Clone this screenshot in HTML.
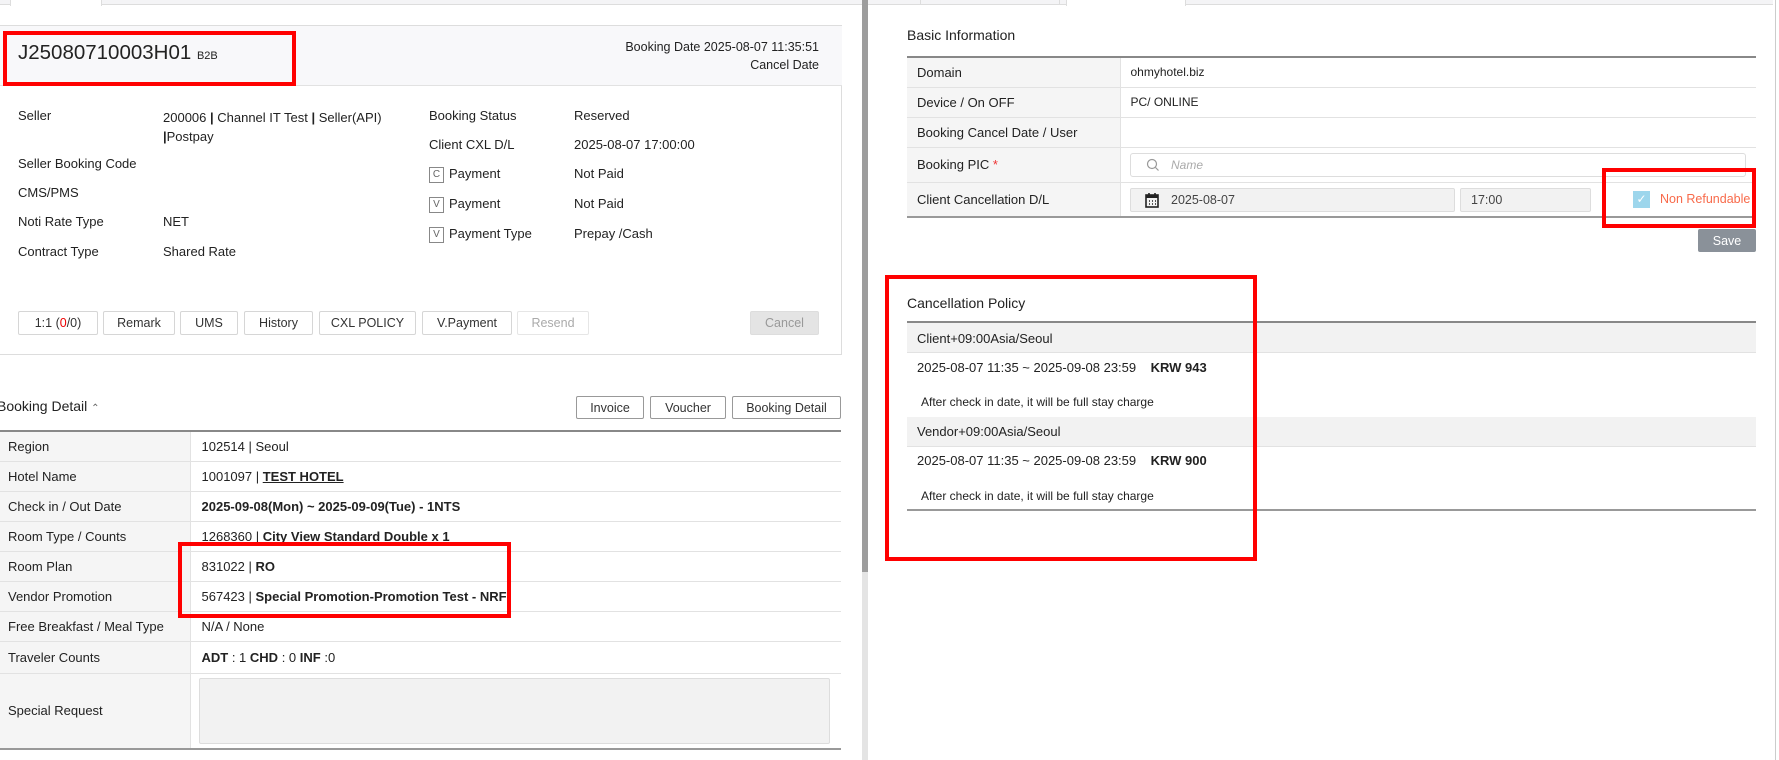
<!DOCTYPE html>
<html><head><meta charset="utf-8"><style>
*{box-sizing:border-box;margin:0;padding:0}
body{width:1779px;height:760px;overflow:hidden;background:#fff;font-family:"Liberation Sans",Arial,sans-serif;font-size:13px;color:#222;position:relative}
.a{position:absolute;white-space:nowrap}
.btn{position:absolute;height:24px;border:1px solid #d6d6d6;border-radius:2px;background:#fff;font-size:12.5px;display:flex;align-items:center;justify-content:center;color:#333}
.red{position:absolute;border:4px solid #f00}
table{border-collapse:collapse;position:absolute}
td{border-bottom:1px solid #e2e2e2;padding:0 0 0 8px;font-size:13px;vertical-align:middle}
td.l{background:#f5f5f5;border-right:1px solid #e2e2e2}
.chk{display:inline-block;width:15px;height:16px;border:1px solid #888;font-size:10px;text-align:center;line-height:14px;color:#666;margin-right:5px;vertical-align:middle}
</style></head><body>
<div class="a" style="left:0;top:0;width:862px;height:5px;background:#f4f4f6;border-bottom:1px solid #ddd"></div>
<div class="a" style="left:10px;top:0;width:92px;height:6px;background:#fff;border-left:1px solid #ddd;border-right:1px solid #ddd"></div>
<div class="a" style="left:0;top:25px;width:842px;height:330px;border:1px solid #ddd;border-left:none;background:#fff"></div>
<div class="a" style="left:0;top:25px;width:842px;height:61px;background:#f8f8fa;border-bottom:1px solid #e2e2e2;border-top:1px solid #ddd"></div>
<div class="a" style="left:18px;top:41px;font-size:20.5px">J25080710003H01 <span style="font-size:11px">B2B</span></div>
<div class="a" style="right:960px;top:38px;font-size:12.5px;text-align:right;line-height:18px">Booking Date 2025-08-07 11:35:51<br>Cancel Date</div>
<div class="red" style="left:3px;top:31px;width:293px;height:55px"></div>
<div class="a" style="left:18px;top:108px">Seller</div>
<div class="a" style="left:163px;top:108px;line-height:19px">200006 <b>|</b> Channel IT Test <b>|</b> Seller(API)<br><b>|</b>Postpay</div>
<div class="a" style="left:18px;top:156px">Seller Booking Code</div>
<div class="a" style="left:18px;top:185px">CMS/PMS</div>
<div class="a" style="left:18px;top:214px">Noti Rate Type</div><div class="a" style="left:163px;top:214px">NET</div>
<div class="a" style="left:18px;top:244px">Contract Type</div><div class="a" style="left:163px;top:244px">Shared Rate</div>
<div class="a" style="left:429px;top:108px">Booking Status</div><div class="a" style="left:574px;top:108px">Reserved</div>
<div class="a" style="left:429px;top:137px">Client CXL D/L</div><div class="a" style="left:574px;top:137px">2025-08-07 17:00:00</div>
<div class="a" style="left:429px;top:166px"><span class="chk">C</span>Payment</div><div class="a" style="left:574px;top:166px">Not Paid</div>
<div class="a" style="left:429px;top:196px"><span class="chk">V</span>Payment</div><div class="a" style="left:574px;top:196px">Not Paid</div>
<div class="a" style="left:429px;top:226px"><span class="chk">V</span>Payment Type</div><div class="a" style="left:574px;top:226px">Prepay /Cash</div>
<div class="btn" style="left:18px;top:311px;width:80px">1:1 (<span style="color:#e00">0</span>/0)</div>
<div class="btn" style="left:103px;top:311px;width:72px">Remark</div>
<div class="btn" style="left:180px;top:311px;width:58px">UMS</div>
<div class="btn" style="left:244px;top:311px;width:69px">History</div>
<div class="btn" style="left:319px;top:311px;width:97px">CXL POLICY</div>
<div class="btn" style="left:422px;top:311px;width:90px">V.Payment</div>
<div class="btn" style="left:517px;top:311px;width:72px;color:#aaa;border-color:#e6e6e6">Resend</div>
<div class="btn" style="left:750px;top:311px;width:69px;background:#e4e4e4;border-color:#ddd;color:#999">Cancel</div>
<div class="a" style="left:-3px;top:398px;font-size:14px">Booking Detail <span style="font-size:10px;color:#666">&#8963;</span></div>
<div class="btn" style="left:576px;top:396px;width:68px;height:23px;border-color:#999">Invoice</div>
<div class="btn" style="left:650px;top:396px;width:76px;height:23px;border-color:#999">Voucher</div>
<div class="btn" style="left:732px;top:396px;width:109px;height:23px;border-color:#999">Booking Detail</div>
<table style="left:0;top:430px;width:841px;border-top:2px solid #888;border-bottom:2px solid #999">
<tr style="height:30px"><td class="l" style="width:190px">Region</td><td style="padding-left:11px">102514 | Seoul</td></tr>
<tr style="height:30px"><td class="l">Hotel Name</td><td style="padding-left:11px">1001097 | <b><u>TEST HOTEL</u></b></td></tr>
<tr style="height:30px"><td class="l">Check in / Out Date</td><td style="padding-left:11px"><b>2025-09-08(Mon) ~ 2025-09-09(Tue) - 1NTS</b></td></tr>
<tr style="height:30px"><td class="l">Room Type / Counts</td><td style="padding-left:11px">1268360 | <b>City View Standard Double x 1</b></td></tr>
<tr style="height:30px"><td class="l">Room Plan</td><td style="padding-left:11px">831022 | <b>RO</b></td></tr>
<tr style="height:30px"><td class="l">Vendor Promotion</td><td style="padding-left:11px">567423 | <b>Special Promotion-Promotion Test - NRF</b></td></tr>
<tr style="height:30px"><td class="l">Free Breakfast / Meal Type</td><td style="padding-left:11px">N/A / None</td></tr>
<tr style="height:32px"><td class="l">Traveler Counts</td><td style="padding-left:11px"><b>ADT</b> : 1 <b>CHD</b> : 0 <b>INF</b> :0</td></tr>
<tr style="height:76px"><td class="l">Special Request</td><td></td></tr>
</table>
<div class="a" style="left:199px;top:678px;width:631px;height:66px;background:#f2f2f2;border:1px solid #ddd;border-radius:2px"></div>
<div class="red" style="left:178px;top:542px;width:333px;height:76px"></div>
<div class="a" style="left:862px;top:0;width:6px;height:760px;background:#e4e4e4"></div>
<div class="a" style="left:862px;top:0;width:6px;height:572px;background:#9d9d9d"></div>
<div class="a" style="left:868px;top:0;width:905px;height:5px;background:#f4f4f6;border-bottom:1px solid #ddd"></div>
<div class="a" style="left:920px;top:0;width:140px;height:5px;border-left:1px solid #ddd;border-right:1px solid #ddd"></div>
<div class="a" style="left:1066px;top:0;width:120px;height:6px;background:#fff;border-left:1px solid #ddd;border-right:1px solid #ddd"></div>
<div class="a" style="left:907px;top:27px;font-size:14px">Basic Information</div>
<table style="left:907px;top:56px;width:849px;border-top:2px solid #888;border-bottom:2px solid #999">
<tr style="height:30px"><td class="l" style="width:213px;padding-left:10px">Domain</td><td style="padding-left:10px;font-size:12px">ohmyhotel.biz</td></tr>
<tr style="height:30px"><td class="l" style="padding-left:10px">Device / On OFF</td><td style="padding-left:10px;font-size:12px">PC/ ONLINE</td></tr>
<tr style="height:30px"><td class="l" style="padding-left:10px">Booking Cancel Date / User</td><td></td></tr>
<tr style="height:35px"><td class="l" style="padding-left:10px">Booking PIC <span style="color:#e33">*</span></td><td></td></tr>
<tr style="height:35px"><td class="l" style="padding-left:10px">Client Cancellation D/L</td><td></td></tr>
</table>
<div class="a" style="left:1130px;top:153px;width:616px;height:24px;border:1px solid #ddd;border-radius:3px;background:#fff"></div>
<svg class="a" style="left:1146px;top:158px" width="14" height="14" viewBox="0 0 14 14"><circle cx="6" cy="6" r="4.5" fill="none" stroke="#999" stroke-width="1.2"/><path d="M9.5 9.5L12.5 12.5" stroke="#999" stroke-width="1.2"/></svg>
<div class="a" style="left:1171px;top:158px;font-size:12px;color:#aaa;font-style:italic">Name</div>
<div class="a" style="left:1130px;top:188px;width:325px;height:24px;border:1px solid #ddd;border-radius:2px;background:#f2f2f2"></div>
<svg class="a" style="left:1145px;top:192px" width="14" height="16" viewBox="0 0 14 16"><rect x="1" y="3" width="12" height="12" fill="none" stroke="#222" stroke-width="1.6"/><rect x="1" y="3" width="12" height="3" fill="#222"/><path d="M4 1v3M10 1v3" stroke="#222" stroke-width="1.6"/><path d="M4 9h1M7 9h1M10 9h1M4 12h1M7 12h1M10 12h1" stroke="#222" stroke-width="1.5"/></svg>
<div class="a" style="left:1171px;top:193px;font-size:12.5px;color:#444">2025-08-07</div>
<div class="a" style="left:1460px;top:188px;width:131px;height:24px;border:1px solid #ddd;border-radius:2px;background:#f2f2f2"></div>
<div class="a" style="left:1471px;top:193px;font-size:12.5px;color:#444">17:00</div>
<div class="a" style="left:1633px;top:191px;width:17px;height:17px;background:#9dd6ec;color:#fff;font-size:12px;text-align:center;line-height:17px">&#10003;</div>
<div class="a" style="left:1660px;top:192px;font-size:12.5px;color:#f86a4a">Non Refundable</div>
<div class="red" style="left:1602px;top:168px;width:154px;height:60px"></div>
<div class="btn" style="left:1698px;top:229px;width:58px;height:23px;background:#8a9199;border-color:#8a9199;color:#fff">Save</div>
<div class="a" style="left:907px;top:295px;font-size:14px">Cancellation Policy</div>
<div class="a" style="left:907px;top:321px;width:849px;height:190px;border-top:2px solid #888;border-bottom:2px solid #999"></div>
<div class="a" style="left:907px;top:323px;width:849px;height:30px;background:#f2f2f2;border-bottom:1px solid #e2e2e2"></div>
<div class="a" style="left:917px;top:331px">Client+09:00Asia/Seoul</div>
<div class="a" style="left:917px;top:360px">2025-08-07 11:35 ~ 2025-09-08 23:59 &nbsp;&nbsp;&nbsp;<b>KRW 943</b></div>
<div class="a" style="left:921px;top:395px;font-size:12px">After check in date, it will be full stay charge</div>
<div class="a" style="left:907px;top:417px;width:849px;height:30px;background:#f2f2f2;border-bottom:1px solid #e2e2e2"></div>
<div class="a" style="left:917px;top:424px">Vendor+09:00Asia/Seoul</div>
<div class="a" style="left:917px;top:453px">2025-08-07 11:35 ~ 2025-09-08 23:59 &nbsp;&nbsp;&nbsp;<b>KRW 900</b></div>
<div class="a" style="left:921px;top:489px;font-size:12px">After check in date, it will be full stay charge</div>
<div class="red" style="left:885px;top:275px;width:372px;height:286px"></div>
<div class="a" style="left:1775px;top:0;width:1px;height:760px;background:#ccc"></div>
</body></html>
